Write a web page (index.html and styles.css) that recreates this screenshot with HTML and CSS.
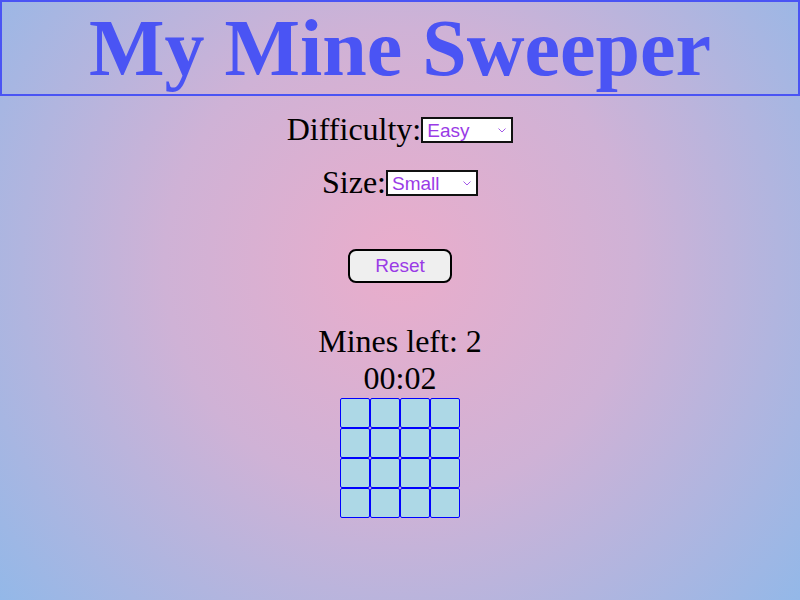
FILE: index.html
```html
<!DOCTYPE html>
<html lang="en">
<head>
<meta charset="utf-8">
<title>My Mine Sweeper</title>
<link rel="stylesheet" href="styles.css">
</head>
<body>
<h1 class="title">My Mine Sweeper</h1>
<main class="game">
  <div class="field field-first">
    <label class="field-label" for="difficulty">Difficulty:</label>
    <span class="select-wrap">
      <select id="difficulty" class="select"><option>Easy</option><option>Medium</option><option>Hard</option></select>
      <svg class="chevron" viewBox="0 0 8 5" width="8" height="5"><path d="M0.5 0.5 L4 4 L7.5 0.5" fill="none" stroke="#a35ae8" stroke-width="1"/></svg>
    </span>
  </div>
  <div class="field field-second">
    <label class="field-label" for="size">Size:</label>
    <span class="select-wrap">
      <select id="size" class="select"><option>Small</option><option>Medium</option><option>Large</option></select>
      <svg class="chevron" viewBox="0 0 8 5" width="8" height="5"><path d="M0.5 0.5 L4 4 L7.5 0.5" fill="none" stroke="#a35ae8" stroke-width="1"/></svg>
    </span>
  </div>
  <button class="reset" type="button">Reset</button>
  <div class="status">
    <div class="status-line">Mines left: 2</div>
    <div class="status-line">00:02</div>
  </div>
  <div class="board">
    <div class="cell"></div><div class="cell"></div><div class="cell"></div><div class="cell"></div>
    <div class="cell"></div><div class="cell"></div><div class="cell"></div><div class="cell"></div>
    <div class="cell"></div><div class="cell"></div><div class="cell"></div><div class="cell"></div>
    <div class="cell"></div><div class="cell"></div><div class="cell"></div><div class="cell"></div>
  </div>
</main>
</body>
</html>
```
FILE: styles.css
```css
html {
  min-height: 100%;
  background: radial-gradient(circle at 50% 44%, #eaadcb 0%, #cfb2d6 45%, #93b8e8 100%);
}

body {
  margin: 0;
  font-family: "Liberation Serif", "Times New Roman", serif;
  color: #000;
}

.title {
  margin: 0;
  border: 2px solid #4a54f4;
  color: #4a54f4;
  font: 700 80px/92px "Liberation Serif", "Times New Roman", serif;
  text-align: center;
}

.game {
  display: flex;
  flex-direction: column;
  align-items: center;
}

.field {
  display: flex;
  align-items: center;
  height: 37px;
  font-size: 32px;
  line-height: 37px;
}

.field-first {
  margin-top: 15px;
}

.field-second {
  margin-top: 16px;
}

.select-wrap {
  position: relative;
  display: block;
  height: 26px;
}

.select {
  appearance: none;
  -webkit-appearance: none;
  display: block;
  box-sizing: border-box;
  width: 92px;
  height: 26px;
  margin: 0;
  padding: 1px 0 0 4px;
  border: 2px solid #111;
  border-radius: 0;
  background: #fff;
  color: #9a3be6;
  font: 19px/21px "Liberation Sans", Arial, sans-serif;
}

.chevron {
  position: absolute;
  right: 7px;
  top: 11px;
  pointer-events: none;
}

.reset {
  box-sizing: border-box;
  width: 104px;
  height: 34px;
  margin-top: 48px;
  padding: 0;
  border: 2px solid #000;
  border-radius: 8px;
  background: #efefef;
  color: #9a3be6;
  font: 19px "Liberation Sans", Arial, sans-serif;
}

.status {
  margin-top: 40px;
  font-size: 32px;
  line-height: 37px;
  text-align: center;
}

.board {
  display: grid;
  grid-template-columns: repeat(4, 30px);
  grid-auto-rows: 30px;
  margin-top: 1px;
}

.cell {
  box-sizing: border-box;
  border: 1px solid #0000ff;
  border-radius: 2px;
  background: #add8e6;
}
```
